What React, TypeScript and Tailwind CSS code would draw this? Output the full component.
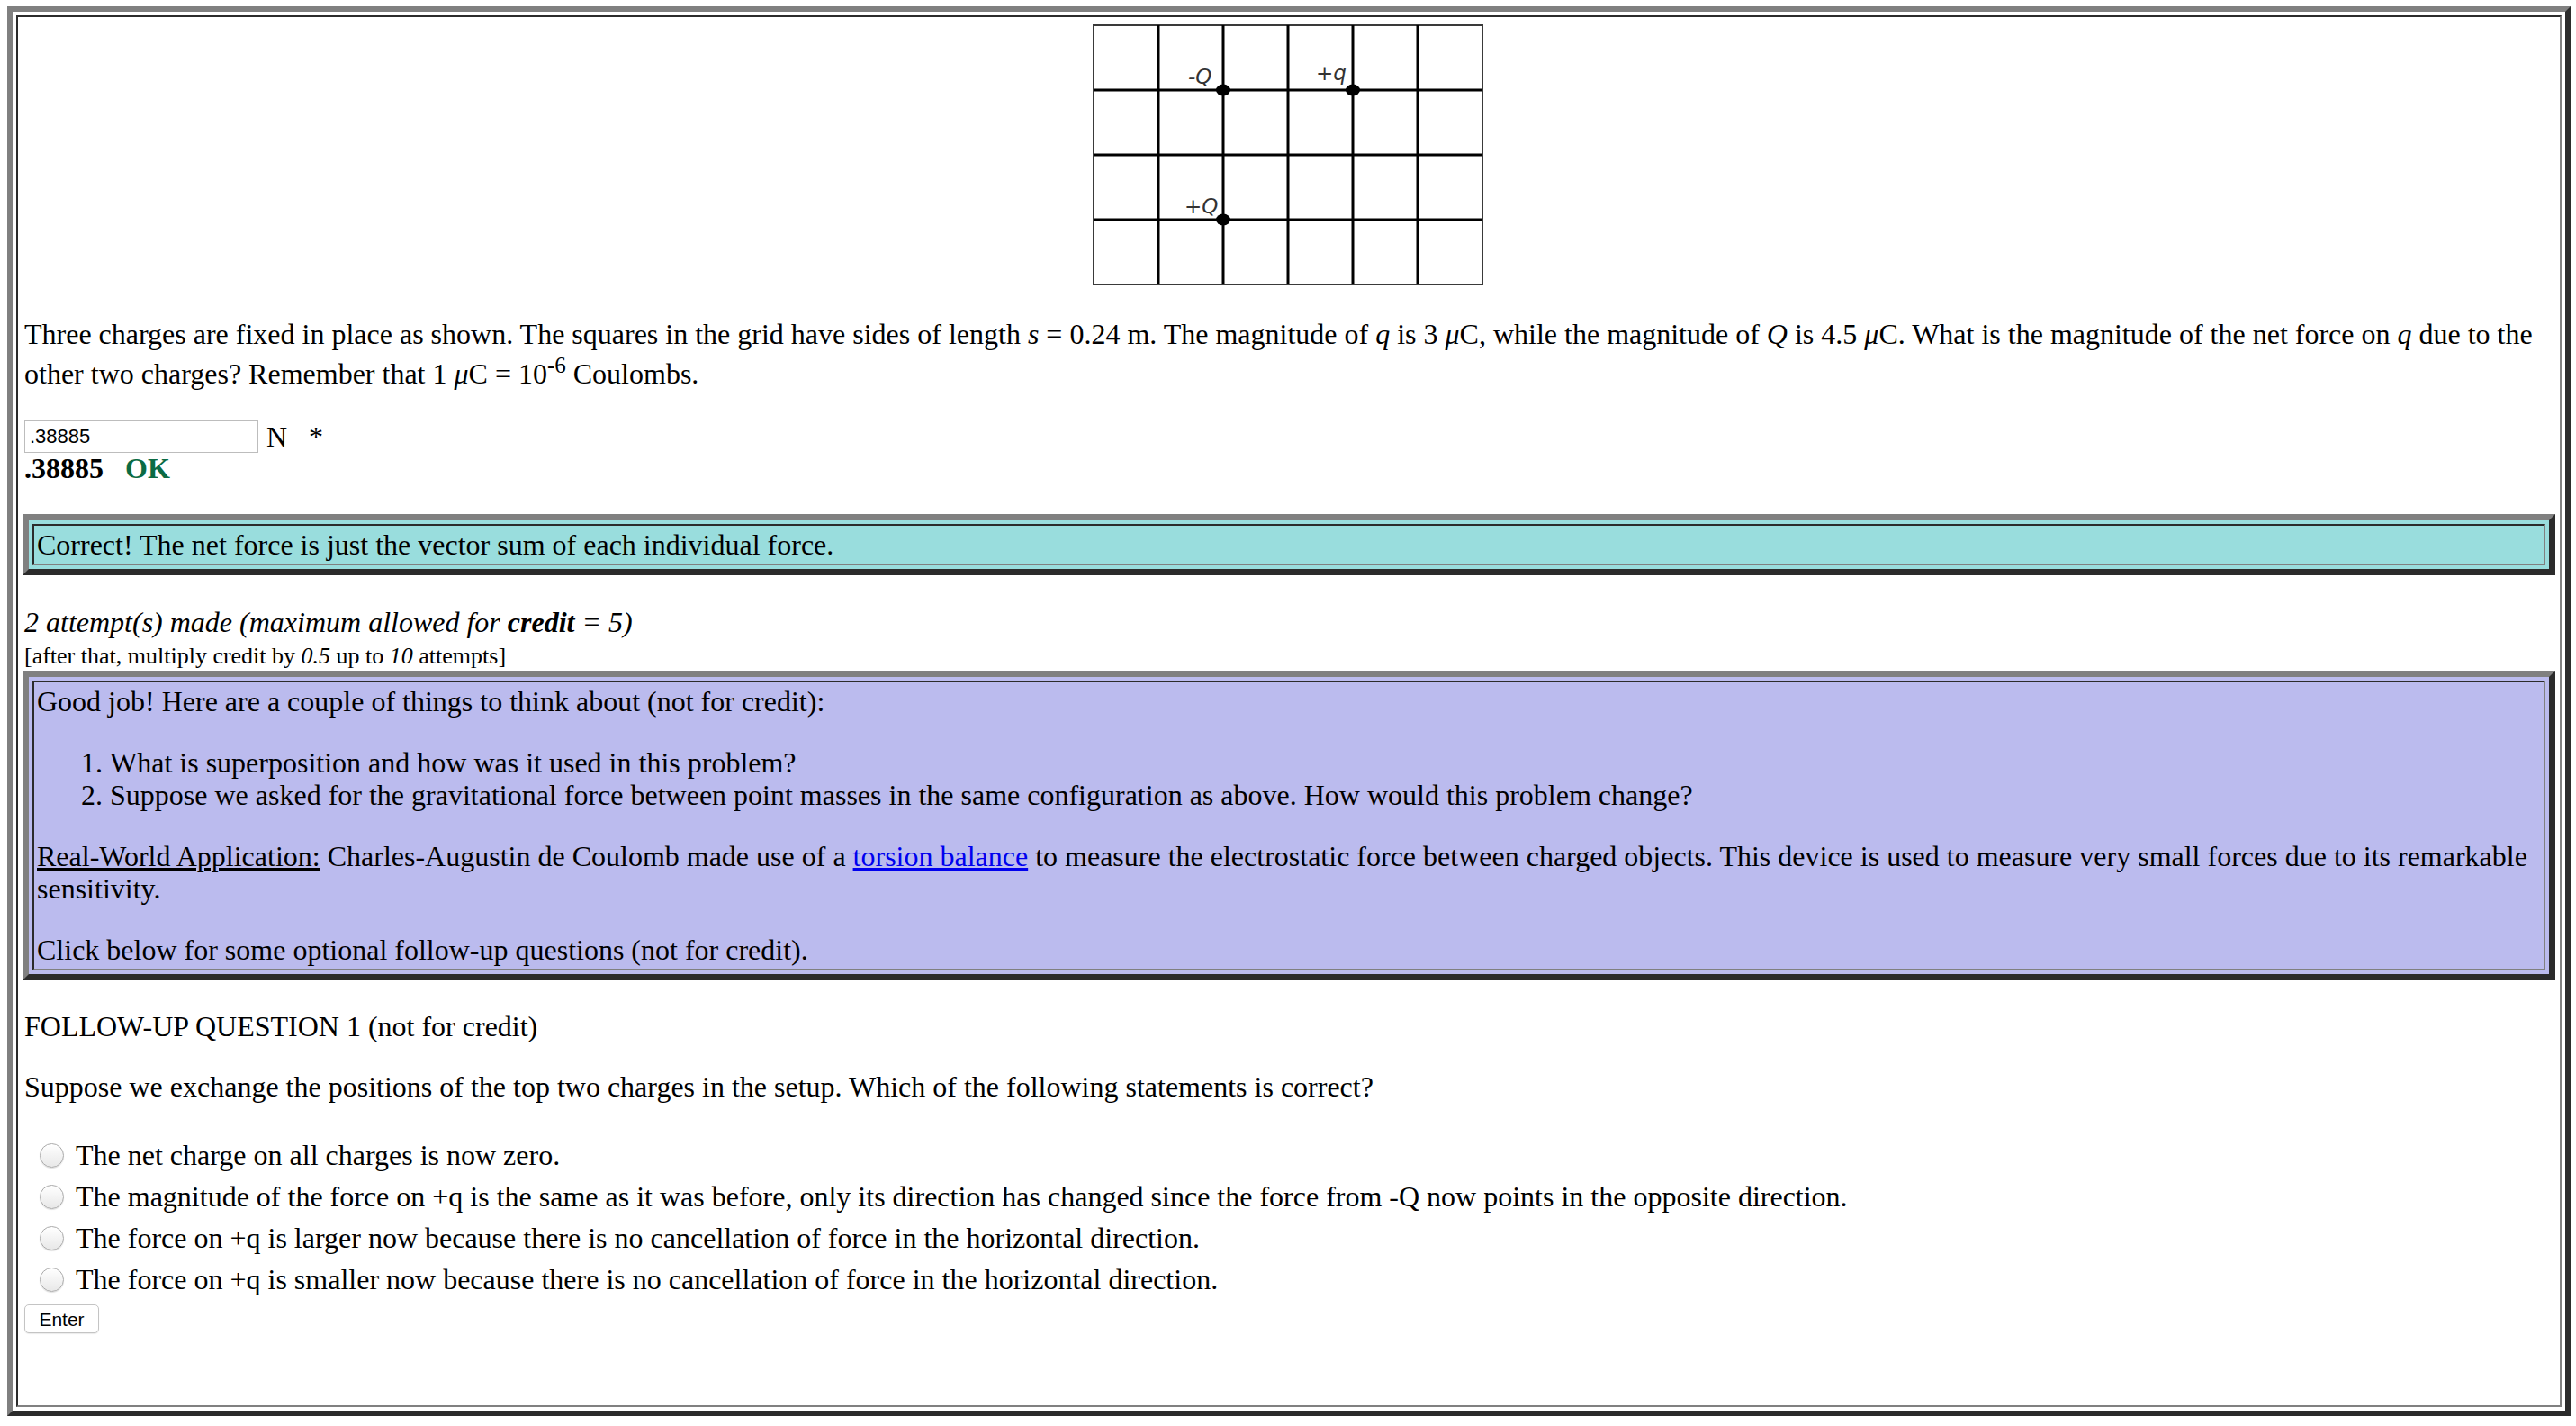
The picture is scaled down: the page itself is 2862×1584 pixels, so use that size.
import React from 'react';

function ChargeGrid() {
  const cols = [72, 144, 216, 288, 360];
  const rows = [72, 144, 216];

  return (
    <svg width="434" height="290" viewBox="0 0 434 290" className="mr-[5px]">
      <rect x="1" y="1" width="432" height="288" fill="#fff" stroke="#3a3a3a" strokeWidth="2" />
      {cols.map((x) => (
        <line key={'c' + x} x1={x + 1} y1="1" x2={x + 1} y2="289" stroke="#000" strokeWidth="3" />
      ))}
      {rows.map((y) => (
        <line key={'r' + y} x1="1" y1={y + 1} x2="433" y2={y + 1} stroke="#000" strokeWidth="3" />
      ))}
      <ellipse cx="145" cy="73" rx="8" ry="6.5" fill="#000" />
      <ellipse cx="289" cy="73" rx="8" ry="6.5" fill="#000" />
      <ellipse cx="145" cy="217" rx="8" ry="6.5" fill="#000" />
      <g fontFamily="'DejaVu Sans', sans-serif" fontStyle="italic" fontSize="23" fill="#333">
        <text x="106" y="66">-Q</text>
        <text x="248" y="62">+q</text>
        <text x="102" y="210">+Q</text>
      </g>
    </svg>
  );
}

function Radio({ children }: { children: React.ReactNode }) {
  return (
    <div className="flex items-center h-[46px]">
      <span className="ml-[17px] w-[27px] h-[27px] rounded-full border border-[#aaaaaa] bg-gradient-to-b from-white to-[#e8e8e8] shadow-[0_1px_1px_rgba(0,0,0,0.12)] shrink-0" />
      <span className="ml-[13px]">{children}</span>
    </div>
  );
}

// bevelled box like the old table border=... bgcolor=... output
function Callout({ bg, children }: { bg: string; children: React.ReactNode }) {
  return (
    <div
      className={`-ml-[2px] border-[7px] border-t-[#808080] border-l-[#808080] border-b-[#2b2b2b] border-r-[#2b2b2b] p-[4px] ${bg}`}
    >
      <div className="border-2 border-t-[#2b2b2b] border-l-[#2b2b2b] border-b-[#808080] border-r-[#808080] p-[3px] leading-[36px]">
        {children}
      </div>
    </div>
  );
}

export default function App() {
  return (
    <div className="min-h-screen bg-white font-['Liberation_Serif',serif] text-[32px] text-black">
      <div className="pl-[8px] pt-[7px]">
        <div className="w-[2848px] h-[1566px] flex border-[6px] border-t-[#808080] border-l-[#808080] border-b-[#2b2b2b] border-r-[#2b2b2b] p-[4px]">
          <div className="flex-1 border-2 border-t-[#2b2b2b] border-l-[#2b2b2b] border-b-[#808080] border-r-[#808080] pl-[7px] pr-[5px] pt-[8px]">
            <div className="flex justify-center">
              <ChargeGrid />
            </div>

            <p className="mt-[32px] leading-[44px]">
              Three charges are fixed in place as shown. The squares in the grid have sides of length <i>s</i> = 0.24
              m. The magnitude of <i>q</i> is 3 <i>μ</i>C, while the magnitude of <i>Q</i> is 4.5 <i>μ</i>C. What is the
              magnitude of the net force on <i>q</i> due to the other two charges? Remember that 1 <i>μ</i>C = 10
              <sup className="text-[25px] relative -top-[12px]">-6</sup> Coulombs.
            </p>

            <div className="mt-[24px] flex items-center">
              <input
                readOnly
                value=".38885"
                className="w-[260px] h-[36px] border border-[#bdbdbd] px-[5px] font-['Liberation_Sans',sans-serif] text-[22px] outline-none"
              />
              <span className="ml-[9px]">N</span>
              <span className="ml-[24px]">*</span>
            </div>
            <div className="leading-[22px] font-bold">
              .38885<span className="ml-[24px] text-[#0b6b44]">OK</span>
            </div>

            <div className="mt-[40px]">
              <Callout bg="bg-[#99dddd]">Correct! The net force is just the vector sum of each individual force.</Callout>
            </div>

            <div className="mt-[34px] leading-[36px] italic">
              2 attempt(s) made (maximum allowed for <b>credit</b> = 5)
            </div>
            <div className="mt-[4px] text-[26px] leading-[32px]">
              [after that, multiply credit by <i>0.5</i> up to <i>10</i> attempts]
            </div>

            <Callout bg="bg-[#bbbbee]">
              <div>Good job! Here are a couple of things to think about (not for credit):</div>
              <ol className="list-decimal pl-[81px] my-[32px]">
                <li>What is superposition and how was it used in this problem?</li>
                <li>
                  Suppose we asked for the gravitational force between point masses in the same configuration as
                  above. How would this problem change?
                </li>
              </ol>
              <div>
                <u>Real-World Application:</u> Charles-Augustin de Coulomb made use of a{' '}
                <a href="#" className="text-[#0000ee] underline">
                  torsion balance
                </a>{' '}
                to measure the electrostatic force between charged objects. This device is used to measure very small
                forces due to its remarkable sensitivity.
              </div>
              <div className="mt-[32px]">Click below for some optional follow-up questions (not for credit).</div>
            </Callout>

            <div className="mt-[33px] leading-[36px]">FOLLOW-UP QUESTION 1 (not for credit)</div>
            <div className="mt-[31px] leading-[36px]">
              Suppose we exchange the positions of the top two charges in the setup. Which of the following statements
              is correct?
            </div>

            <div className="mt-[35px]">
              <Radio>The net charge on all charges is now zero.</Radio>
              <Radio>
                The magnitude of the force on +q is the same as it was before, only its direction has changed since
                the force from -Q now points in the opposite direction.
              </Radio>
              <Radio>The force on +q is larger now because there is no cancellation of force in the horizontal direction.</Radio>
              <Radio>The force on +q is smaller now because there is no cancellation of force in the horizontal direction.</Radio>
            </div>
            <button className="block mt-[5px] w-[83px] h-[32px] rounded-[5px] border border-[#c4c4c4] bg-white font-['Liberation_Sans',sans-serif] text-[21px] shadow-[0_1px_1px_rgba(0,0,0,0.08)]">
              Enter
            </button>
          </div>
        </div>
      </div>
    </div>
  );
}
